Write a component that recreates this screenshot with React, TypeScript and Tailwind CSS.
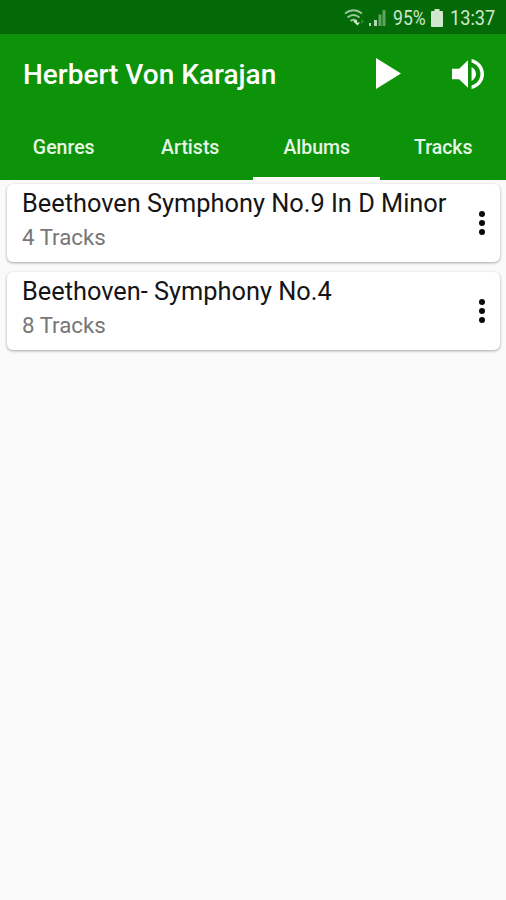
import React, { useState } from 'react';

interface Album {
  title: string;
  tracks: number;
}

const tabs = ['Genres', 'Artists', 'Albums', 'Tracks'];

const albums: Album[] = [
  { title: 'Beethoven Symphony No.9 In D Minor', tracks: 4 },
  { title: 'Beethoven- Symphony No.4', tracks: 8 },
];

const StatusBar: React.FC = () => (
  <div className="flex h-[34px] items-center justify-end bg-[#046a08] pr-[10px] pt-[2px] text-[20px] text-[#cfe6cf]">
    <svg className="mr-[3px] h-[18px] w-[22px]" viewBox="0 0 22 18" fill="none">
      <path d="M1 4.5Q9.5 -2 18 4.5M3.5 8.5Q9.5 3.5 15.5 8.5M6.5 12Q9.5 9.5 12.5 12" stroke="#9cc89d" strokeWidth="1.8" />
      <path d="M9 12L13 11V13.5H16L13.5 16.5Z" fill="#cfe6cf" />
      <path d="M17 10L20.5 12.5L17 15Z" fill="#2f8434" />
    </svg>
    <svg className="mr-[7px] h-[18px] w-[17px]" viewBox="0 0 17 18">
      <path d="M0 14h2v3H0zM5 11h3v6H5z" fill="#b5d6b5" />
      <path d="M9.5 5.5h3V17h-3zM13.5 1h3v16h-3z" fill="#5fa461" />
    </svg>
    <span className="w-[33px] whitespace-nowrap">
      <span className="inline-block origin-left scale-x-[0.88]">95%</span>
    </span>
    <svg className="ml-[5px] mr-[7px] h-[18px] w-[12px]" viewBox="0 0 12 18">
      <path d="M3.5 0h5v2H11q1 0 1 1v14q0 1-1 1H1q-1 0-1-1V3q0-1 1-1h2.5z" fill="#cfe6cf" />
    </svg>
    <span className="w-[46px] whitespace-nowrap">
      <span className="inline-block origin-left scale-x-[0.91]">13:37</span>
    </span>
  </div>
);

const Toolbar: React.FC = () => (
  <div className="flex h-[80px] items-center pl-[23px] pr-[22px] text-white">
    <h1 className="flex-1 whitespace-nowrap pt-[2px] text-[28px] font-medium leading-8">Herbert Von Karajan</h1>
    <button className="mr-[51px] pb-[1px]" aria-label="Play">
      <svg className="block h-[31px] w-[25px]" viewBox="0 0 25 31" fill="currentColor">
        <path d="M0 0L25 15.5L0 31Z" />
      </svg>
    </button>
    <button className="pb-[1px]" aria-label="Volume">
      <svg className="block h-[30px] w-[32px]" viewBox="3 3.23 18 17.54" preserveAspectRatio="none" fill="currentColor">
        <path d="M3 9v6h4l5 5V4L7 9H3zm13.5 3c0-1.77-1.02-3.29-2.5-4.03v8.05c1.48-.73 2.5-2.25 2.5-4.02zM14 3.23v2.06c2.89.86 5 3.54 5 6.71s-2.11 5.85-5 6.71v2.06c4.01-.91 7-4.49 7-8.77s-2.99-7.86-7-8.77z" />
      </svg>
    </button>
  </div>
);

const AlbumCard: React.FC<{ album: Album }> = ({ album }) => (
  <div className="flex h-[78px] items-center justify-between rounded-[6px] bg-white px-[15px] shadow-[0_1px_3px_rgba(0,0,0,0.35)]">
    <div className="flex h-full flex-col whitespace-nowrap pt-[3px]">
      <span className="text-[25.35px] leading-[32px] text-[#151515]">{album.title}</span>
      <span className="mt-[3px] text-[22.3px] leading-[30px] text-[#777777]">{album.tracks} Tracks</span>
    </div>
    <button aria-label="More options">
      <svg className="h-[24px] w-[6px]" viewBox="0 0 6 24" fill="#0a0a0a">
        <circle cx="3" cy="3" r="3" />
        <circle cx="3" cy="12" r="3" />
        <circle cx="3" cy="21" r="3" />
      </svg>
    </button>
  </div>
);

const App: React.FC = () => {
  const [active, setActive] = useState('Albums');

  return (
    <div className="min-h-screen w-full bg-[#fafafa] font-['Roboto','Liberation_Sans',sans-serif]">
      <StatusBar />
      <header className="bg-[#0d930a]">
        <Toolbar />
        <nav className="grid h-[66px] grid-cols-4">
          {tabs.map((tab) => (
            <button
              key={tab}
              onClick={() => setActive(tab)}
              className={`border-b-[3px] pl-[1px] pt-[4px] text-[19.5px] font-medium text-[#e6f6e6] ${
                active === tab ? 'border-white' : 'border-transparent'
              }`}
            >
              {tab}
            </button>
          ))}
        </nav>
      </header>
      <main className="flex flex-col gap-[10px] pl-[7px] pr-[6px] pt-[4px]">
        {albums.map((album) => (
          <AlbumCard key={album.title} album={album} />
        ))}
      </main>
    </div>
  );
};

export default App;
